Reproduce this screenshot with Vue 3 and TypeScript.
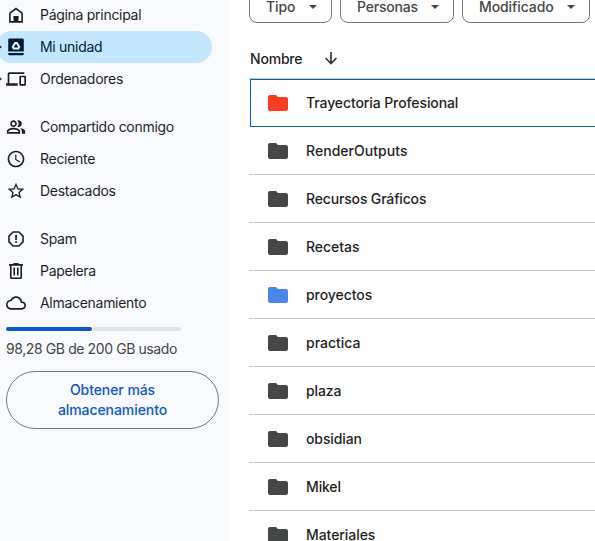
<script setup lang="ts">
type IconName = 'home' | 'drive' | 'devices' | 'people' | 'clock' | 'star' | 'spam' | 'trash' | 'cloud'

interface NavItem {
  label: string
  icon: IconName
  active?: boolean
  expandable?: boolean
}

interface Folder {
  name: string
  color?: 'red' | 'blue'
  selected?: boolean
  tracking?: number
}

const groups: NavItem[][] = [
  [
    { label: 'Página principal', icon: 'home' },
    { label: 'Mi unidad', icon: 'drive', active: true, expandable: true },
    { label: 'Ordenadores', icon: 'devices', expandable: true },
  ],
  [
    { label: 'Compartido conmigo', icon: 'people' },
    { label: 'Reciente', icon: 'clock' },
    { label: 'Destacados', icon: 'star' },
  ],
  [
    { label: 'Spam', icon: 'spam' },
    { label: 'Papelera', icon: 'trash' },
    { label: 'Almacenamiento', icon: 'cloud' },
  ],
]

const chips = ['Tipo', 'Personas', 'Modificado']

const folders: Folder[] = [
  { name: 'Trayectoria Profesional', color: 'red', selected: true, tracking: -0.1 },
  { name: 'RenderOutputs', tracking: 0.04 },
  { name: 'Recursos Gráficos', tracking: -0.16 },
  { name: 'Recetas', tracking: -0.05 },
  { name: 'proyectos', color: 'blue', tracking: -0.05 },
  { name: 'practica' },
  { name: 'plaza', tracking: -0.1 },
  { name: 'obsidian', tracking: -0.1 },
  { name: 'Mikel', tracking: -0.15 },
  { name: 'Materiales', tracking: -0.06 },
]
</script>

<template>
  <div class="app">
    <aside class="sidebar">
      <nav>
        <ul v-for="(group, g) in groups" :key="g" class="group">
          <li
            v-for="item in group"
            :key="item.label"
            class="item"
            :class="{ active: item.active }"
          >
            <span v-if="item.expandable" class="caret"></span>
            <svg v-if="item.icon === 'home'" class="icon" viewBox="0 0 20 20">
              <path d="M3.9 16.9V8.1L10 3.6l6.1 4.5v8.8z" fill="none" stroke="currentColor" stroke-width="1.6" />
              <path d="M7.5 11h5v6h-5z" />
            </svg>
            <svg v-else-if="item.icon === 'drive'" class="icon" viewBox="0 0 20 20">
              <path d="M3.6 1.5h12.8c.8 0 1.4.6 1.4 1.4v11.6H2.2V2.9c0-.8.6-1.4 1.4-1.4zM2.2 16h15.6v.9c0 .8-.6 1.4-1.4 1.4H3.6c-.8 0-1.4-.6-1.4-1.4z" />
              <path class="mark" d="M9.1 6.100h1.800l2.300 4-.9 1.500H7.700l-.9-1.500z" />
            </svg>
            <svg v-else-if="item.icon === 'devices'" class="icon" viewBox="0 0 24 24">
              <path d="M4 6h18V4H4c-1.1 0-2 .9-2 2v11H0v3h14v-3H4V6zm19 2h-6c-.55 0-1 .45-1 1v10c0 .55.45 1 1 1h6c.55 0 1-.45 1-1V9c0-.55-.45-1-1-1zm-1 10h-4v-8h4v8z" />
            </svg>
            <svg v-else-if="item.icon === 'people'" class="icon" viewBox="0 0 24 24">
              <path d="M16.67 13.13C18.04 14.06 19 15.32 19 17v3h4v-3c0-2.18-3.57-3.47-6.33-3.87zM15 12c2.21 0 4-1.79 4-4s-1.79-4-4-4c-.47 0-.91.1-1.33.24a5.98 5.98 0 0 1 0 7.52c.42.14.86.24 1.33.24zM9 12c2.21 0 4-1.79 4-4s-1.79-4-4-4-4 1.79-4 4 1.79 4 4 4zm0-6c1.1 0 2 .9 2 2s-.9 2-2 2-2-.9-2-2 .9-2 2-2zm0 7c-2.67 0-8 1.34-8 4v3h16v-3c0-2.66-5.33-4-8-4zm6 5H3v-.99C3.2 16.29 6.3 15 9 15s5.8 1.29 6 2v1z" />
            </svg>
            <svg v-else-if="item.icon === 'clock'" class="icon" viewBox="0 0 24 24">
              <path d="M11.99 2C6.47 2 2 6.48 2 12s4.47 10 9.99 10C17.52 22 22 17.52 22 12S17.52 2 11.99 2zM12 20c-4.42 0-8-3.58-8-8s3.58-8 8-8 8 3.58 8 8-3.58 8-8 8zm.5-13H11v6l5.25 3.15.75-1.23-4.5-2.67z" />
            </svg>
            <svg v-else-if="item.icon === 'star'" class="icon" viewBox="0 0 24 24">
              <path d="M22 9.24l-7.19-.62L12 2 9.19 8.63 2 9.24l5.46 4.73L5.82 21 12 17.27 18.18 21l-1.63-7.03L22 9.24zM12 15.4l-3.76 2.27 1-4.28-3.32-2.88 4.38-.38L12 6.1l1.71 4.04 4.38.38-3.32 2.88 1 4.28L12 15.4z" />
            </svg>
            <svg v-else-if="item.icon === 'spam'" class="icon" viewBox="0 0 20 20">
              <path d="M7.1 3h5.8L17 7.1v5.8L12.9 17H7.1L3 12.9V7.1z" fill="none" stroke="currentColor" stroke-width="1.6" stroke-linejoin="round" />
              <path d="M9.2 5.800h1.700v5.100H9.2zM9.2 12.300h1.700v1.600H9.2z" />
            </svg>
            <svg v-else-if="item.icon === 'trash'" class="icon" viewBox="0 0 20 20">
              <path d="M7.5 2h5v1H17v1.700h-1v11.800c0 .8-.7 1.500-1.500 1.500h-9c-.8 0-1.500-.7-1.500-1.500V4.700H3V3h4.500zM5.600 4.700v11.700h8.800V4.700zM7.400 6.500H9v8H7.400zM11 6.500h1.600v8H11z" fill-rule="evenodd" />
            </svg>
            <svg v-else class="icon" viewBox="0 0 24 24">
              <path d="M19.35 10.04C18.67 6.59 15.64 4 12 4 9.11 4 6.6 5.64 5.35 8.04 2.34 8.36 0 10.91 0 14c0 3.31 2.69 6 6 6h13c2.76 0 5-2.24 5-5 0-2.64-2.05-4.78-4.65-4.96zM19 18H6c-2.21 0-4-1.79-4-4 0-2.05 1.53-3.76 3.56-3.97l1.07-.11.5-.95C8.08 7.14 9.94 6 12 6c2.62 0 4.88 1.86 5.39 4.43l.3 1.5 1.53.11c1.56.1 2.78 1.41 2.78 2.96 0 1.65-1.35 3-3 3z" />
            </svg>
            <span class="label">{{ item.label }}</span>
          </li>
        </ul>
      </nav>
      <div class="meter">
        <span class="used"></span>
        <span class="free"></span>
      </div>
      <p class="quota">98,28 GB de 200 GB usado</p>
      <button class="upgrade" type="button">Obtener más almacenamiento</button>
    </aside>

    <main class="content">
      <div class="chips">
        <button v-for="chip in chips" :key="chip" class="chip" :class="chip.toLowerCase()" type="button">
          <span>{{ chip }}</span>
          <svg class="drop" viewBox="0 0 18 18"><path d="M5 7h8l-4 4z" /></svg>
        </button>
      </div>
      <header class="head">
        <span class="title">Nombre</span>
        <svg class="sort" viewBox="0 0 18 18">
          <path d="M9 2v11.500M3.500 8 9 13.500 14.500 8" fill="none" stroke="currentColor" stroke-width="1.600" />
        </svg>
      </header>
      <ul class="list">
        <li v-for="folder in folders" :key="folder.name" class="row" :class="{ selected: folder.selected }">
          <svg class="folder" :class="folder.color" viewBox="0 0 24 24">
            <path d="M10 4H4c-1.1 0-1.99.9-1.99 2L2 18c0 1.1.9 2 2 2h16c1.1 0 2-.9 2-2V8c0-1.1-.9-2-2-2h-8z" />
          </svg>
          <span class="name" :style="{ letterSpacing: (folder.tracking ?? 0) + 'px' }">{{ folder.name }}</span>
        </li>
      </ul>
    </main>
  </div>
</template>

<style>
body {
  overflow: hidden;
}
</style>

<style scoped>
.app {
  display: flex;
  width: 100%;
  height: 541px;
  overflow: hidden;
  background: #fff;
  color: #1f1f1f;
  font: 400 14px/20px Inter, Roboto, sans-serif;
}
ul {
  margin: 0;
  padding: 0;
  list-style: none;
}
svg {
  display: block;
  flex: none;
  fill: currentColor;
}
.sidebar {
  flex: none;
  box-sizing: border-box;
  width: 229px;
  height: 541px;
  background: #f8fafd;
}
nav {
  margin: -1px 0 0 -4px;
}
.group + .group {
  margin-top: 16px;
}
.item {
  position: relative;
  display: flex;
  align-items: center;
  gap: 14px;
  width: 216px;
  height: 32px;
  box-sizing: border-box;
  padding-left: 10px;
  border-radius: 16px;
}
.active {
  background: #c2e7ff;
  color: #001d35;
}
.icon {
  width: 20px;
  height: 20px;
}
.mark {
  fill: none;
  stroke: #e4f4ff;
  stroke-width: 2;
  stroke-linejoin: round;
}
.caret {
  position: absolute;
  left: 2px;
  top: 13px;
  border: solid transparent;
  border-width: 3px 0 3px 4px;
  border-left-color: #303030;
}
.label {
  letter-spacing: -0.29px;
}
.meter {
  display: flex;
  gap: 1px;
  width: 175px;
  height: 4px;
  margin: 8px 0 0 6px;
}
.used,
.free {
  border-radius: 2px;
}
.used {
  width: 86px;
  background: #0b57d0;
}
.free {
  flex: 1;
  background: #e1e3e1;
}
.quota {
  margin: 8px 0 12px 6px;
  color: #444746;
  letter-spacing: -0.4px;
}
.upgrade {
  display: block;
  box-sizing: border-box;
  width: 213px;
  height: 58px;
  margin-left: 6px;
  padding: 0 40px;
  border: 1px solid #747775;
  border-radius: 29px;
  background: none;
  color: #0b57d0;
  font: inherit;
  font-weight: 500;
  letter-spacing: -0.07px;
}
.content {
  flex: 1;
  min-width: 0;
  padding-left: 20px;
}
.chips {
  display: flex;
  gap: 8px;
  width: 341px;
  margin-top: -9px;
}
.chip {
  display: flex;
  align-items: center;
  justify-content: space-between;
  box-sizing: border-box;
  height: 32px;
  padding: 0 9px 0 16px;
  border: 1px solid #747775;
  border-radius: 8px;
  background: none;
  color: #444746;
  font: inherit;
  font-weight: 500;
  letter-spacing: -0.1px;
}
.tipo {
  width: 83px;
}
.personas {
  width: 114px;
  letter-spacing: -0.2px;
}
.modificado {
  width: 128px;
}
.drop {
  width: 18px;
  height: 18px;
}
.head {
  display: flex;
  align-items: center;
  gap: 20px;
  box-sizing: border-box;
  height: 56px;
  padding: 16px 0 0 1px;
  border-bottom: 1px solid #c7c7c7;
}
.title {
  font-weight: 500;
  letter-spacing: -0.2px;
}
.sort {
  width: 18px;
  height: 18px;
  color: #303030;
}
.row {
  display: flex;
  align-items: center;
  gap: 16px;
  box-sizing: border-box;
  height: 48px;
  padding-left: 17px;
  border-bottom: 1px solid #c7c7c7;
}
.selected {
  margin-left: 1px;
  padding-left: 15px;
  border: 1px solid #0b57d0;
  border-right: 0;
}
.folder {
  width: 24px;
  height: 24px;
  color: #444746;
}
.red {
  color: #fa3a22;
}
.blue {
  color: #4986e7;
}
.name {
  font-weight: 500;
}
</style>
